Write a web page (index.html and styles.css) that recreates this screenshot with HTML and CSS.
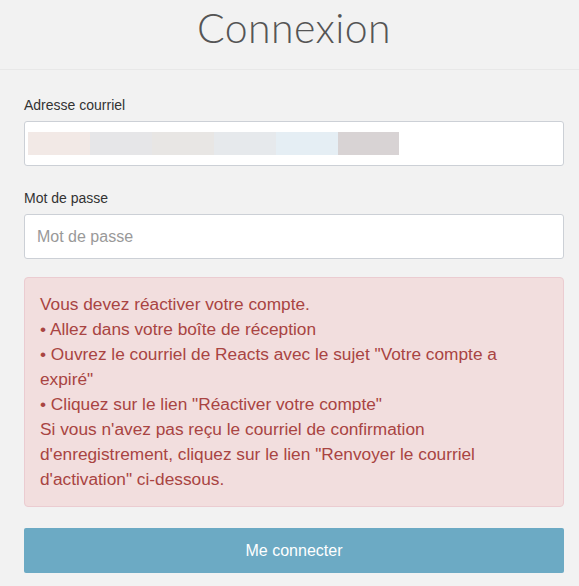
FILE: index.html
```html
<!DOCTYPE html>
<html lang="fr">
<head>
<meta charset="utf-8">
<title>Connexion</title>
<link rel="stylesheet" href="styles.css">
</head>
<body>
<header class="page-header">
  <h1 class="title">Connexion</h1>
</header>
<main class="form">
  <div class="field">
    <label class="label">Adresse courriel</label>
    <div class="input input-email">
      <span class="blur b1"></span><span class="blur b2"></span><span class="blur b3"></span><span class="blur b4"></span><span class="blur b5"></span><span class="blur b6"></span>
    </div>
  </div>
  <div class="field field-last">
    <label class="label">Mot de passe</label>
    <div class="input"><span class="placeholder">Mot de passe</span></div>
  </div>
  <div class="alert">
    Vous devez réactiver votre compte.<br>
    • Allez dans votre boîte de réception<br>
    • Ouvrez le courriel de Reacts avec le sujet "Votre compte a expiré"<br>
    • Cliquez sur le lien "Réactiver votre compte"<br>
    Si vous n'avez pas reçu le courriel de confirmation d'enregistrement, cliquez sur le lien "Renvoyer le courriel d'activation" ci-dessous.
  </div>
  <button class="btn">Me connecter</button>
</main>
</body>
</html>
```

FILE: styles.css
```css
html, body {
  margin: 0;
  padding: 0;
  background: #f2f2f2;
}
body {
  font-family: "Liberation Sans", Arial, sans-serif;
  color: #333;
}
.page-header {
  height: 70px;
  border-bottom: 1px solid #e8e8e8;
  box-sizing: border-box;
  display: flex;
  justify-content: center;
  padding-left: 9px;
}
.title {
  margin: 0;
  padding-top: 4px;
  font-family: Lato, "Open Sans", sans-serif;
  font-weight: 300;
  font-size: 41px;
  line-height: 48px;
  color: #555;
  letter-spacing: 0.4px;
}
.form {
  width: 540px;
  margin-left: 24px;
  padding-top: 25px;
}
.field {
  margin-bottom: 22px;
}
.field-last {
  margin-bottom: 18px;
}
.label {
  display: block;
  font-size: 14px;
  line-height: 20px;
  color: #333;
  margin-bottom: 6px;
}
.input {
  height: 45px;
  box-sizing: border-box;
  background: #fff;
  border: 1px solid #ccd0d6;
  border-radius: 3px;
  display: flex;
  align-items: center;
  padding: 0 12px;
}
.input-email {
  padding: 0 3px;
}
.blur {
  display: block;
  width: 62px;
  height: 23px;
}
.b1 { background: #f2e9e6; }
.b2 { background: #e6e6e8; }
.b3 { background: #e8e6e4; }
.b4 { background: #e6e9ec; }
.b5 { background: #e5eef4; }
.b6 { background: #d8d3d4; width: 61px; }
.placeholder {
  font-size: 16px;
  color: #999;
}
.alert {
  background: #f2dede;
  border: 1px solid #ebccd1;
  border-radius: 4px;
  color: #a94442;
  font-size: 17.3px;
  line-height: 25px;
  padding: 14px 40px 14px 15px;
}
.btn {
  display: block;
  width: 100%;
  height: 45px;
  margin-top: 21px;
  border: 0;
  border-radius: 2px;
  background: #6caac4;
  color: #fff;
  font-family: "Liberation Sans", Arial, sans-serif;
  font-size: 16px;
}
```
